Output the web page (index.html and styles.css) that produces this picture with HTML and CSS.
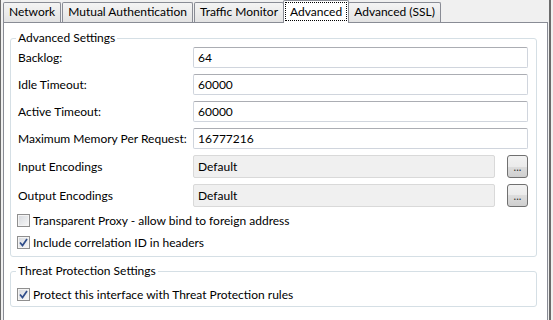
FILE: index.html
```html
<!DOCTYPE html>
<html lang="en">
<head>
  <meta charset="UTF-8" />
  <title>Advanced</title>
  <link rel="stylesheet" href="styles.css">
</head>
<body>

  <div class="window">
    <!-- TABS -->
    <div class="tabs">
      <div class="tab">Network</div>
      <div class="tab">Mutual Authentication</div>
      <div class="tab">Traffic Monitor</div>
      <div class="tab active"><span class="focus">Advanced</span></div>
      <div class="tab">Advanced (SSL)</div>
    </div>

    <div class="panel">
      <fieldset class="group">
        <legend>Advanced Settings</legend>
        <div class="form">
          <label>Backlog:</label>
          <input class="field" type="text" value="64">
          <label>Idle Timeout:</label>
          <input class="field" type="text" value="60000">
          <label>Active Timeout:</label>
          <input class="field" type="text" value="60000">
          <label>Maximum Memory Per Request:</label>
          <input class="field" type="text" value="16777216">
          <label>Input Encodings</label>
          <input class="field disabled" type="text" value="Default" disabled>
          <button class="browse">...</button>
          <label>Output Encodings</label>
          <input class="field disabled" type="text" value="Default" disabled>
          <button class="browse">...</button>
        </div>
        <div class="checks">
          <div class="check"><span class="box"></span>Transparent Proxy - allow bind to foreign address</div>
          <div class="check"><span class="box"><svg width="11" height="11" viewBox="0 0 11 11"><path d="M2 5.5 L4.5 8.5 L9 2" fill="none" stroke="#2f4d8a" stroke-width="1.7"/></svg></span>Include correlation ID in headers</div>
        </div>
      </fieldset>

      <fieldset class="group threat">
        <legend>Threat Protection Settings</legend>
        <div class="checks">
          <div class="check"><span class="box"><svg width="11" height="11" viewBox="0 0 11 11"><path d="M2 5.5 L4.5 8.5 L9 2" fill="none" stroke="#2f4d8a" stroke-width="1.7"/></svg></span>Protect this interface with Threat Protection rules</div>
        </div>
      </fieldset>
    </div>
  </div>

</body>
</html>
```

FILE: styles.css
```css
* {
  box-sizing: border-box;
}

body {
  margin: 0;
  background: #f0f0f0;
  font-family: Lato, "Open Sans", sans-serif;
  font-size: 12px;
  color: #000;
  overflow: hidden;
}

.window {
  width: 551px;
  height: 320px;
  border-left: 1px solid #6b6b6b;
  border-right: 2px solid #6b6b6b;
}

/* tabs */
.tabs {
  display: flex;
  align-items: flex-end;
  height: 22px;
  padding-left: 2px;
}

.tab {
  height: 20px;
  padding: 0 5px;
  margin-right: 1px;
  border: 1px solid #898c95;
  border-bottom: none;
  border-radius: 2px 2px 0 0;
  background: linear-gradient(#f4f4f4, #e3e3e3);
  line-height: 18px;
  white-space: nowrap;
}

.tab.active {
  position: relative;
  z-index: 1;
  height: 23px;
  margin: 0 -1px -1px -2px;
  padding: 1px 1px 0;
  background: #fff;
}

.focus {
  display: inline-block;
  height: 19px;
  padding: 0 4px;
  line-height: 17px;
  border: 1px dotted #000;
}

/* panel */
.panel {
  height: 300px;
  margin: 0 1px 0 2px;
  padding-top: 7px;
  background: #fff;
  border: 1px solid #898c95;
  border-bottom: none;
}

.group {
  min-width: 0;
  margin: 0 10px 0 6px;
  padding: 1px 8px 3px 7px;
  border: 1px solid #d5dfe5;
  border-radius: 3px;
}

.group legend {
  padding: 0 2px;
  margin-left: -2px;
  line-height: 16px;
}

.threat {
  margin-top: 6px;
  padding-top: 2px;
  padding-bottom: 1px;
}

.form {
  display: grid;
  grid-template-columns: 175px 1fr 21px;
  row-gap: 6px;
  align-items: center;
}

.form label {
  white-space: nowrap;
}

.field {
  grid-column: 2 / 4;
  height: 21px;
  padding: 0 4px;
  font: inherit;
  color: #000;
  background: #fff;
  border: 1px solid #d0d5dd;
  border-top-color: #abadb3;
  border-radius: 2px;
  outline: none;
}

.field.disabled {
  grid-column: 2;
  height: 23px;
  margin-right: 12px;
  background: #f0f0f0;
  border-color: #d9d9d9;
  color: #000;
}

.browse {
  width: 21px;
  height: 23px;
  padding: 0;
  font: inherit;
  font-size: 11px;
  color: #333;
  border: 1px solid #707070;
  border-radius: 3px;
  background: linear-gradient(#f2f2f2 0%, #ebebeb 50%, #dddddd 50%, #cfcfcf 100%);
}

.checks {
  margin-top: 2px;
}

.check {
  display: flex;
  align-items: center;
  height: 22px;
  gap: 3px;
}

.box {
  display: flex;
  align-items: center;
  justify-content: center;
  width: 13px;
  height: 13px;
  margin-left: -1px;
  border: 1px solid #8f8f8f;
  background: linear-gradient(135deg, #d6d9de, #f8f8f8);
  box-shadow: inset 0 0 0 1px #f4f4f4;
}
```
